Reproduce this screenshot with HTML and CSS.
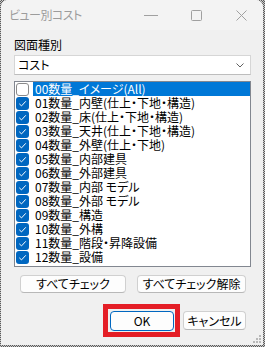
FILE: index.html
```html
<!DOCTYPE html>
<html lang="ja">
<head>
<meta charset="utf-8">
<link rel="stylesheet" href="styles.css">
</head>
<body>
<div class="win">
  <div class="titlebar">
    <span class="title">ビュー別コスト</span>
    <div class="ctrls">
      <span class="ctrl"><svg width="16" height="16" viewBox="0 0 16 16"><path d="M1 8.5h14" stroke="#a0a0a0" stroke-width="1" fill="none"/></svg></span>
      <span class="ctrl"><svg width="16" height="16" viewBox="0 0 16 16"><rect x="3.5" y="3.5" width="10" height="10" rx="1" stroke="#a0a0a0" stroke-width="1" fill="none"/></svg></span>
      <span class="ctrl"><svg width="16" height="16" viewBox="0 0 16 16"><path d="M3.5 3.5l10 10M13.5 3.5l-10 10" stroke="#a0a0a0" stroke-width="1" fill="none"/></svg></span>
    </div>
  </div>
  <div class="client">
    <div class="label">図面種別</div>
    <div class="combo">
      <span>コスト</span>
      <svg class="chev" width="8" height="5" viewBox="0 0 8 5"><path d="M0.5 0.5l3.5 3.5l3.5-3.5" stroke="#606060" stroke-width="1" fill="none"/></svg>
    </div>
    <div class="list">
      <div class="row"><span class="cb"></span><span class="txt sel">00数量_イメージ(All)</span></div>
      <div class="row"><span class="cb on"><svg width="13" height="13" viewBox="0 0 13 13"><path d="M3.3 6.8l2.2 2.1l4.3-4.6" stroke="#fff" stroke-width="1" fill="none"/></svg></span><span class="txt">01数量_内壁(仕上・下地・構造)</span></div>
      <div class="row"><span class="cb on"><svg width="13" height="13" viewBox="0 0 13 13"><path d="M3.3 6.8l2.2 2.1l4.3-4.6" stroke="#fff" stroke-width="1" fill="none"/></svg></span><span class="txt">02数量_床(仕上・下地・構造)</span></div>
      <div class="row"><span class="cb on"><svg width="13" height="13" viewBox="0 0 13 13"><path d="M3.3 6.8l2.2 2.1l4.3-4.6" stroke="#fff" stroke-width="1" fill="none"/></svg></span><span class="txt">03数量_天井(仕上・下地・構造)</span></div>
      <div class="row"><span class="cb on"><svg width="13" height="13" viewBox="0 0 13 13"><path d="M3.3 6.8l2.2 2.1l4.3-4.6" stroke="#fff" stroke-width="1" fill="none"/></svg></span><span class="txt">04数量_外壁(仕上・下地)</span></div>
      <div class="row"><span class="cb on"><svg width="13" height="13" viewBox="0 0 13 13"><path d="M3.3 6.8l2.2 2.1l4.3-4.6" stroke="#fff" stroke-width="1" fill="none"/></svg></span><span class="txt">05数量_内部建具</span></div>
      <div class="row"><span class="cb on"><svg width="13" height="13" viewBox="0 0 13 13"><path d="M3.3 6.8l2.2 2.1l4.3-4.6" stroke="#fff" stroke-width="1" fill="none"/></svg></span><span class="txt">06数量_外部建具</span></div>
      <div class="row"><span class="cb on"><svg width="13" height="13" viewBox="0 0 13 13"><path d="M3.3 6.8l2.2 2.1l4.3-4.6" stroke="#fff" stroke-width="1" fill="none"/></svg></span><span class="txt">07数量_内部 モデル</span></div>
      <div class="row"><span class="cb on"><svg width="13" height="13" viewBox="0 0 13 13"><path d="M3.3 6.8l2.2 2.1l4.3-4.6" stroke="#fff" stroke-width="1" fill="none"/></svg></span><span class="txt">08数量_外部 モデル</span></div>
      <div class="row"><span class="cb on"><svg width="13" height="13" viewBox="0 0 13 13"><path d="M3.3 6.8l2.2 2.1l4.3-4.6" stroke="#fff" stroke-width="1" fill="none"/></svg></span><span class="txt">09数量_構造</span></div>
      <div class="row"><span class="cb on"><svg width="13" height="13" viewBox="0 0 13 13"><path d="M3.3 6.8l2.2 2.1l4.3-4.6" stroke="#fff" stroke-width="1" fill="none"/></svg></span><span class="txt">10数量_外構</span></div>
      <div class="row"><span class="cb on"><svg width="13" height="13" viewBox="0 0 13 13"><path d="M3.3 6.8l2.2 2.1l4.3-4.6" stroke="#fff" stroke-width="1" fill="none"/></svg></span><span class="txt">11数量_階段・昇降設備</span></div>
      <div class="row"><span class="cb on"><svg width="13" height="13" viewBox="0 0 13 13"><path d="M3.3 6.8l2.2 2.1l4.3-4.6" stroke="#fff" stroke-width="1" fill="none"/></svg></span><span class="txt">12数量_設備</span></div>
    </div>
    <div class="btnrow">
      <button class="btn wide1">すべてチェック</button>
      <button class="btn wide2">すべてチェック解除</button>
    </div>
    <div class="okrow">
      <div class="okwrap"><button class="btn ok">OK</button></div>
      <button class="btn cancel">キャンセル</button>
    </div>
  </div>
  <svg class="grip" width="8" height="8" viewBox="0 0 8 8"><g fill="#b8b8b8"><rect x="6" y="0" width="2" height="2"/><rect x="3" y="3" width="2" height="2"/><rect x="6" y="3" width="2" height="2"/><rect x="0" y="6" width="2" height="2"/><rect x="3" y="6" width="2" height="2"/><rect x="6" y="6" width="2" height="2"/></g></svg>
</div>
</body>
</html>
```

FILE: styles.css
```css
html, body {
  margin: 0;
  padding: 0;
}
body {
  width: 265px;
  height: 347px;
  overflow: hidden;
  background: repeating-conic-gradient(#5a5a5a 0 25%, #c8c8c8 0 50%) 0 0 / 2px 2px;
  font-family: "Noto Sans CJK JP", "Noto Sans", sans-serif;
  font-feature-settings: "palt";
  font-size: 12px;
  color: #000;
}
.win {
  position: relative;
  margin-left: 1px;
  width: 262px;
  height: 345px;
  background: #f0f0f0;
  border-radius: 7px 7px 0 0;
  overflow: hidden;
}
.titlebar {
  height: 30px;
  background: #f3f3f3;
  display: flex;
  align-items: center;
}
.title {
  flex: 1;
  padding-left: 8px;
  color: #9c9c9c;
  font-size: 12px;
  line-height: 30px;
  letter-spacing: -0.5px;
}
.ctrls {
  display: flex;
  height: 30px;
}
.ctrl {
  width: 45px;
  height: 30px;
  display: flex;
  align-items: center;
  justify-content: center;
}
.client {
  padding: 0 12px 0 13px;
}
.label {
  margin-top: 7px;
  height: 15px;
  line-height: 15px;
}
.combo {
  margin-top: 3px;
  box-sizing: border-box;
  height: 20px;
  background: #fff;
  border: 1px solid #d6d6d6;
  border-bottom-color: #bdbdbd;
  display: flex;
  align-items: center;
  justify-content: space-between;
  padding: 0 6px 0 3px;
  line-height: 18px;
}
.chev {
  display: block;
}
.list {
  margin-top: 6px;
  box-sizing: border-box;
  height: 186px;
  background: #fff;
  border: 1px solid #828790;
}
.row {
  height: 14px;
  display: flex;
  align-items: center;
}
.cb {
  box-sizing: border-box;
  width: 13px;
  height: 13px;
  margin-left: 1px;
  border: 1px solid #8a8a8a;
  border-radius: 3px;
  background: #fff;
  flex: none;
}
.cb.on {
  border: none;
  background: #0067c0;
}
.cb svg {
  display: block;
}
.txt {
  margin-left: 4px;
  padding-left: 2px;
  line-height: 14px;
  height: 14px;
  white-space: nowrap;
  flex: 1;
}
.txt.sel {
  background: #0078d7;
  color: #fff;
}
.btn {
  box-sizing: border-box;
  font-family: inherit;
  font-feature-settings: "palt";
  font-size: 12px;
  color: #000;
  background: #fdfdfd;
  border: 1px solid #d0d0d0;
  border-bottom-color: #b8b8b8;
  border-radius: 4px;
  padding: 0;
  margin: 0;
  line-height: 16px;
}
.btnrow {
  margin-top: 8px;
  padding-left: 6px;
  display: flex;
  gap: 11px;
}
.wide1 {
  width: 106px;
  height: 18px;
}
.wide2 {
  width: 109px;
  height: 18px;
}
.okrow {
  margin-top: 18px;
  padding-left: 96px;
  display: flex;
  gap: 9px;
}
.okwrap {
  position: relative;
}
.okwrap::after {
  content: "";
  position: absolute;
  left: -7px;
  top: -7px;
  right: -6px;
  bottom: -6px;
  border: 5px solid #e41e26;
}
.ok {
  display: block;
  width: 64px;
  height: 20px;
  border: 1px solid #0067c0;
}
.cancel {
  width: 63px;
  height: 19px;
}
.grip {
  position: absolute;
  right: 2px;
  bottom: 2px;
}
```
